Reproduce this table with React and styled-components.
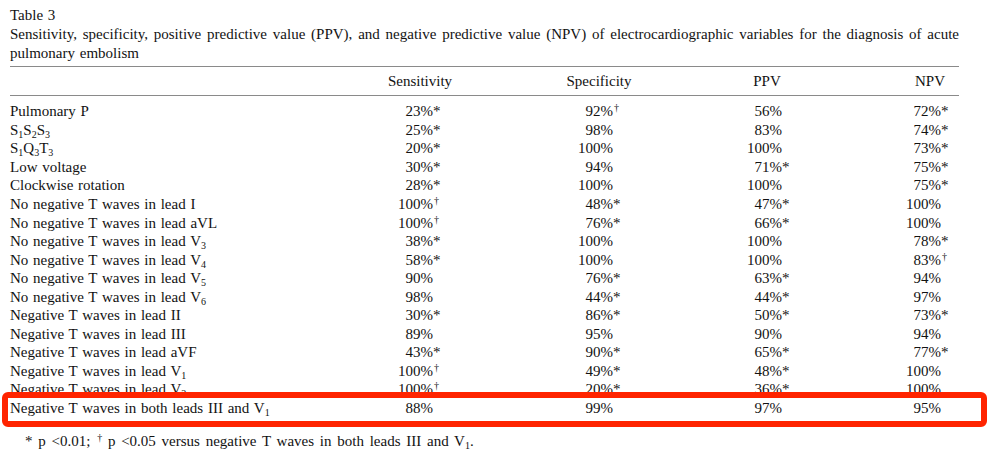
import React from "react";
import styled, { createGlobalStyle } from "styled-components";

const GlobalStyle = createGlobalStyle`
  html, body {
    margin: 0;
    padding: 0;
    background: #ffffff;
  }
  body {
    font-family: "Liberation Serif", "Times New Roman", serif;
    color: #121212;
  }
`;

const Page = styled.div`
  width: 949px;
  padding: 5px 0 0 10px;
  font-size: 15px;
  word-spacing: 1px;
`;

const Caption = styled.div`
  line-height: 19px;
  padding-top: 1px;
`;

const CaptionLine = styled.div`
  white-space: nowrap;
  text-align: ${(p) => (p.$justify ? "justify" : "left")};
  text-align-last: ${(p) => (p.$justify ? "justify" : "auto")};
`;

const HeaderRow = styled.div`
  display: grid;
  grid-template-columns: 360px 100px 79px 100px 68px 100px 64px 78px;
  margin-top: 3px;
  padding: 5px 0 4px;
  line-height: 18.6px;
  border-top: 1px solid #8a8a8a;
  border-bottom: 1px solid #8a8a8a;

  & > :nth-child(1) {
    grid-column: 1;
  }
  & > :nth-child(2) {
    grid-column: 2;
  }
  & > :nth-child(3) {
    grid-column: 4;
  }
  & > :nth-child(4) {
    grid-column: 6;
  }
  & > :nth-child(5) {
    grid-column: 8;
    text-align: right;
    padding-right: 14px;
  }
`;

const HeadCell = styled.div`
  text-align: center;
  white-space: nowrap;
`;

const Body = styled.div`
  padding-top: 6.7px;
`;

const Row = styled.div`
  position: relative;
  display: grid;
  grid-template-columns: 373px 50px 30px 150px 30px 139px 30px 129px 18px;
  height: 18.56px;
  line-height: 18.56px;
  white-space: nowrap;

  ${(p) =>
    p.$highlight &&
    `
    &::after {
      content: "";
      position: absolute;
      left: -8px;
      right: -28px;
      top: -6.7px;
      bottom: -9.7px;
      border: 6px solid #ff2400;
      border-radius: 6px;
      pointer-events: none;
    }
  `}
`;

const Label = styled.div``;

const Num = styled.div`
  text-align: right;
`;

const Mark = styled.div`
  text-align: left;
`;

const Sub = styled.sub`
  font-size: 10px;
  line-height: 0;
  vertical-align: -3px;
`;

const Dagger = styled.sup`
  font-size: 10px;
  line-height: 0;
  vertical-align: 5px;
  margin-left: 1px;
`;

const Footnote = styled.div`
  margin-top: 14px;
  padding-left: 15px;
  line-height: 19px;
  word-spacing: 2px;
`;

const V = ({ n }) => (
  <>
    V<Sub>{n}</Sub>
  </>
);

const rows = [
  ["Pulmonary P", "23%*", "92%†", "56%", "72%*"],
  [
    <>
      S<Sub>1</Sub>S<Sub>2</Sub>S<Sub>3</Sub>
    </>,
    "25%*",
    "98%",
    "83%",
    "74%*",
  ],
  [
    <>
      S<Sub>1</Sub>Q<Sub>3</Sub>T<Sub>3</Sub>
    </>,
    "20%*",
    "100%",
    "100%",
    "73%*",
  ],
  ["Low voltage", "30%*", "94%", "71%*", "75%*"],
  ["Clockwise rotation", "28%*", "100%", "100%", "75%*"],
  ["No negative T waves in lead I", "100%†", "48%*", "47%*", "100%"],
  ["No negative T waves in lead aVL", "100%†", "76%*", "66%*", "100%"],
  [<>No negative T waves in lead <V n="3" /></>, "38%*", "100%", "100%", "78%*"],
  [<>No negative T waves in lead <V n="4" /></>, "58%*", "100%", "100%", "83%†"],
  [<>No negative T waves in lead <V n="5" /></>, "90%", "76%*", "63%*", "94%"],
  [<>No negative T waves in lead <V n="6" /></>, "98%", "44%*", "44%*", "97%"],
  ["Negative T waves in lead II", "30%*", "86%*", "50%*", "73%*"],
  ["Negative T waves in lead III", "89%", "95%", "90%", "94%"],
  ["Negative T waves in lead aVF", "43%*", "90%*", "65%*", "77%*"],
  [<>Negative T waves in lead <V n="1" /></>, "100%†", "49%*", "48%*", "100%"],
  [<>Negative T waves in lead <V n="2" /></>, "100%†", "20%*", "36%*", "100%"],
];

const highlighted = [
  <>Negative T waves in both leads III and <V n="1" /></>,
  "88%",
  "99%",
  "97%",
  "95%",
];

function Value({ text }) {
  const last = text.slice(-1);
  const mark = last === "*" || last === "†" ? last : "";
  const num = mark ? text.slice(0, -1) : text;
  return (
    <>
      <Num>{num}</Num>
      <Mark>{mark === "†" ? <Dagger>†</Dagger> : mark}</Mark>
    </>
  );
}

function DataRow({ cells, highlight }) {
  const [label, ...values] = cells;
  return (
    <Row $highlight={highlight}>
      <Label>{label}</Label>
      {values.map((v, i) => (
        <Value key={i} text={v} />
      ))}
    </Row>
  );
}

export default function App() {
  return (
    <>
      <GlobalStyle />
      <Page>
        <Caption>
          <CaptionLine>Table 3</CaptionLine>
          <CaptionLine $justify>
            Sensitivity, specificity, positive predictive value (PPV), and negative predictive
            value (NPV) of electrocardiographic variables for the diagnosis of acute
          </CaptionLine>
          <CaptionLine>pulmonary embolism</CaptionLine>
        </Caption>
        <HeaderRow>
          <HeadCell />
          <HeadCell>Sensitivity</HeadCell>
          <HeadCell>Specificity</HeadCell>
          <HeadCell>PPV</HeadCell>
          <HeadCell>NPV</HeadCell>
        </HeaderRow>
        <Body>
          {rows.map((r, i) => (
            <DataRow key={i} cells={r} />
          ))}
          <DataRow cells={highlighted} highlight />
        </Body>
        <Footnote>
          * p &lt;0.01; <Dagger>†</Dagger> p &lt;0.05 versus negative T waves in both leads III
          and V<Sub>1</Sub>.
        </Footnote>
      </Page>
    </>
  );
}
